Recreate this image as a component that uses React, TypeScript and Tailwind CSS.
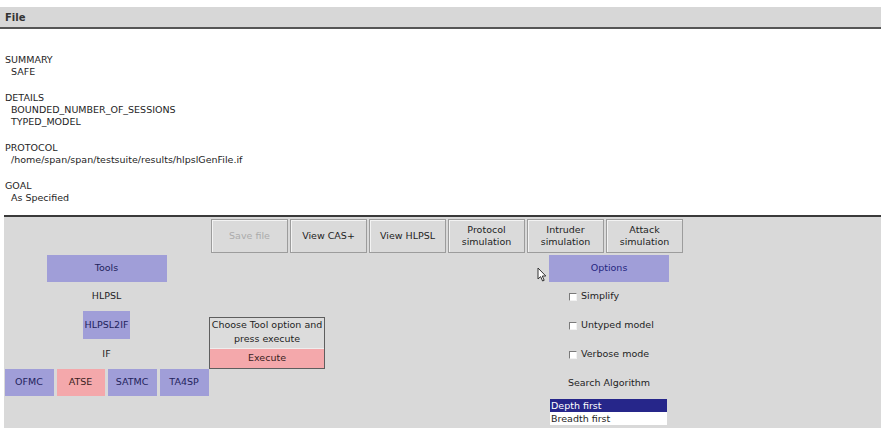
import React from "react";

const report = [
  { title: "SUMMARY", lines: ["SAFE"] },
  { title: "DETAILS", lines: ["BOUNDED_NUMBER_OF_SESSIONS", "TYPED_MODEL"] },
  { title: "PROTOCOL", lines: ["/home/span/span/testsuite/results/hlpslGenFile.if"] },
  { title: "GOAL", lines: ["As Specified"] },
];

const actions = [
  { label: ["Save file"], disabled: true },
  { label: ["View CAS+"] },
  { label: ["View HLPSL"] },
  { label: ["Protocol", "simulation"] },
  { label: ["Intruder", "simulation"] },
  { label: ["Attack", "simulation"] },
];

const tools = [
  { name: "OFMC", active: false, w: "w-[49px]" },
  { name: "ATSE", active: true, w: "w-[48px]" },
  { name: "SATMC", active: false, w: "w-[49px]" },
  { name: "TA4SP", active: false, w: "w-[49px]" },
];

const options = ["Simplify", "Untyped model", "Verbose mode"];

const ActionButton = ({ label, disabled }: { label: string[]; disabled?: boolean }) => (
  <div
    className={`flex h-full w-[77px] flex-col items-center justify-center border border-[#9c9c9c] bg-[#dadada] leading-[12px] shadow-[inset_1px_1px_0_#f3f3f3] ${
      disabled ? "text-[#ababab]" : "text-[#1e1e1e]"
    }`}
  >
    {label.map((l) => (
      <span key={l}>{l}</span>
    ))}
  </div>
);

const Checkbox = ({ label }: { label: string }) => (
  <div className="flex h-[29px] items-center pl-[20px] text-[#1e1e1e]">
    <span className="mr-[4px] h-[8px] w-[8px] border border-b-[#f2f2f2] border-l-[#7a7a7a] border-r-[#f2f2f2] border-t-[#7a7a7a] bg-white" />
    {label}
  </div>
);

const Cursor = () => (
  <svg className="absolute left-[533px] top-[50px]" width="10" height="15" viewBox="0 0 10 15">
    <path d="M1 1 L1 12 L3.6 9.6 L5.6 14 L7.2 13.3 L5.3 9 L8.8 9 Z" fill="#fff" stroke="#333" strokeWidth="1" strokeLinejoin="round" />
  </svg>
);

const App = () => (
  <div
    className="flex h-[428px] w-[881px] flex-col overflow-hidden bg-white text-[9.5px] text-[#1e1e1e]"
    style={{ fontFamily: '"DejaVu Sans", "Liberation Sans", sans-serif' }}
  >
    {/* menu bar */}
    <div className="mt-[7px] flex h-[22px] items-center border-b-2 border-[#555] bg-[#d7d7d7] pl-[5px]">
      <span className="text-[10px] font-bold text-[#333]">File</span>
    </div>

    {/* result text */}
    <div className="flex h-[186px] flex-col gap-[14px] pl-[5px] pt-[25px] leading-[12px]">
      {report.map((section) => (
        <div key={section.title}>
          <div>{section.title}</div>
          {section.lines.map((line) => (
            <div key={line} className="pl-[6px]">
              {line}
            </div>
          ))}
        </div>
      ))}
    </div>

    {/* control panel */}
    <div className="relative ml-[4px] flex flex-1 flex-col border-t-2 border-[#3a3a3a] bg-[#d9d9d9]">
      <div className="ml-[207px] mt-[2px] flex h-[34px] gap-[2px]">
        {actions.map((a) => (
          <ActionButton key={a.label.join(" ")} label={a.label} disabled={a.disabled} />
        ))}
      </div>

      <div className="flex">
        <div className="flex w-[205px] flex-col items-center">
          <div className="mt-[2px] flex h-[27px] w-[120px] items-center justify-center bg-[#a09ed8] text-[#23235c]">
            Tools
          </div>
          <div className="flex h-[29px] items-center">HLPSL</div>
          <div className="flex h-[28px] w-[47px] items-center justify-center bg-[#a09ed8] text-[#23235c]">
            HLPSL2IF
          </div>
          <div className="flex h-[30px] items-center">IF</div>
          <div className="flex h-[27px] gap-[3px]">
            {tools.map((t) => (
              <div
                key={t.name}
                className={`flex h-full items-center justify-center ${t.w} ${
                  t.active ? "bg-[#f4a8ab] text-[#3a1e1e]" : "bg-[#a09ed8] text-[#23235c]"
                }`}
              >
                {t.name}
              </div>
            ))}
          </div>
        </div>

        <div className="mt-[64px] flex h-[52px] w-[116px] flex-col border border-[#5e5e5e] bg-[#dcdcdc]">
          <div className="flex flex-col items-center pt-[0px] leading-[14px]">
            <span>Choose Tool option and</span>
            <span>press execute</span>
          </div>
          <div className="mt-auto flex h-[20px] items-center justify-center border-t border-[#eeeeee] bg-[#f4a8ab] text-[#3a1e1e]">
            Execute
          </div>
        </div>

        <div className="ml-[224px] flex w-[120px] flex-col">
          <div className="mt-[2px] flex h-[27px] items-center justify-center bg-[#a09ed8] text-[#262680]">
            Options
          </div>
          {options.map((o) => (
            <Checkbox key={o} label={o} />
          ))}
          <div className="flex h-[29px] items-center justify-center">Search Algorithm</div>
          <div className="ml-[1px] mt-[1px] w-[117px] bg-white leading-[13px]">
            <div className="bg-[#26268a] pl-[1px] text-white">Depth first</div>
            <div className="pl-[1px]">Breadth first</div>
          </div>
        </div>
      </div>

      <Cursor />
    </div>
  </div>
);

export default App;
